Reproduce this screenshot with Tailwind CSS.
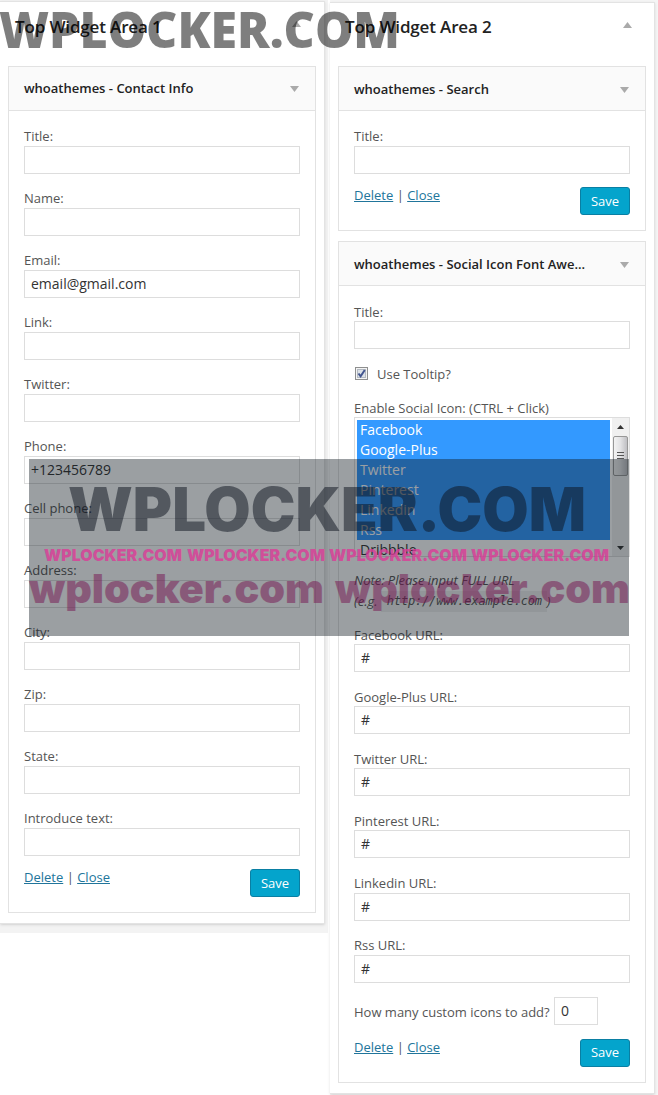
<!DOCTYPE html>
<html lang="en">
<head>
<meta charset="utf-8">
<title>Widgets</title>
<script src="https://cdn.jsdelivr.net/npm/@tailwindcss/browser@4"></script>
</head>
<body class="bg-white">
<div class="relative flex w-[658px] h-[1095px] items-start overflow-hidden font-['Open_Sans',sans-serif] text-[13px] leading-5 text-[#555]">

  <!-- Area 1 -->
  <section class="w-[328px] h-[933px] bg-[#f3f3f3] pt-px shrink-0">
    <div class="w-[325px] h-[923px] bg-white border-t border-r border-b border-[#e3e3e3] shadow-sm pl-2">
      <header class="flex h-16 items-start justify-between pl-[7px] pr-[23px]">
        <h2 class="pt-[12px] text-[17px] leading-[26px] font-semibold tracking-[-0.15px] text-[#222]">Top Widget Area 1</h2>
        <svg class="mt-[19px]" width="9" height="6"><path d="M4.5 0L9 6H0Z" fill="#aaa"/></svg>
      </header>
      <article class="w-[308px] h-[847px] border border-[#e2e2e2]">
        <header class="flex h-[44px] items-center justify-between bg-[#fafafa] border-b border-[#e2e2e2] pl-[15px] pr-4">
          <h3 class="pb-px font-semibold text-[#222]">whoathemes - Contact Info</h3>
          <svg width="9" height="6"><path d="M0 0H9L4.5 6Z" fill="#aaa"/></svg>
        </header>
        <div class="px-[15px] pt-[15px]">
          <div class="flex flex-col gap-[14px]">
            <label class="block">Title:<span class="block h-7 border border-[#ddd] bg-white"></span></label>
            <label class="block">Name:<span class="block h-7 border border-[#ddd] bg-white"></span></label>
            <label class="block">Email:<span class="block h-7 border border-[#ddd] bg-white px-1.5 text-[14px] leading-[26px] text-[#333]">email@gmail.com</span></label>
            <label class="block">Link:<span class="block h-7 border border-[#ddd] bg-white"></span></label>
            <label class="block">Twitter:<span class="block h-7 border border-[#ddd] bg-white"></span></label>
            <label class="block">Phone:<span class="block h-7 border border-[#ddd] bg-white px-1.5 text-[14px] leading-[26px] text-[#333]">+123456789</span></label>
            <label class="block">Cell phone:<span class="block h-7 border border-[#ddd] bg-white"></span></label>
            <label class="block">Address:<span class="block h-7 border border-[#ddd] bg-white"></span></label>
            <label class="block">City:<span class="block h-7 border border-[#ddd] bg-white"></span></label>
            <label class="block">Zip:<span class="block h-7 border border-[#ddd] bg-white"></span></label>
            <label class="block">State:<span class="block h-7 border border-[#ddd] bg-white"></span></label>
            <label class="block">Introduce text:<span class="block h-7 border border-[#ddd] bg-white"></span></label>
          </div>
          <footer class="mt-[13px] flex items-start justify-between">
            <p class="-mt-[2px]"><a class="text-[#21759b] underline">Delete</a> | <a class="text-[#21759b] underline">Close</a></p>
            <button class="h-7 w-[50px] rounded-[3px] border border-[#0a7fa3] bg-[#04a4cc] text-white">Save</button>
          </footer>
        </div>
      </article>
    </div>
  </section>

  <!-- Area 2 -->
  <section class="ml-[2px] w-[328px] h-[1095px] bg-[#f5f5f5] pt-[2px] shrink-0">
    <div class="w-[325px] h-[1092px] bg-white border-t border-r border-b border-[#e3e3e3] shadow-sm pl-2">
      <header class="flex h-[63px] items-start justify-between pl-[7px] pr-[22px]">
        <h2 class="pt-[11px] text-[17px] leading-[26px] font-semibold tracking-[-0.15px] text-[#222]">Top Widget Area 2</h2>
        <svg class="mt-[19px]" width="9" height="6"><path d="M4.5 0L9 6H0Z" fill="#aaa"/></svg>
      </header>
      <article class="w-[308px] h-[165px] border border-[#e2e2e2]">
        <header class="flex h-[44px] items-center justify-between bg-[#fafafa] border-b border-[#e2e2e2] pl-[15px] pr-4">
          <h3 class="pt-px font-semibold text-[#222]">whoathemes - Search</h3>
          <svg class="mt-[2px]" width="9" height="6"><path d="M0 0H9L4.5 6Z" fill="#aaa"/></svg>
        </header>
        <div class="px-[15px] pt-[15px]">
          <label class="block">Title:<span class="block h-7 border border-[#ddd] bg-white"></span></label>
          <footer class="mt-[13px] flex items-start justify-between">
            <p class="-mt-[2px]"><a class="text-[#21759b] underline">Delete</a> | <a class="text-[#21759b] underline">Close</a></p>
            <button class="h-7 w-[50px] rounded-[3px] border border-[#0a7fa3] bg-[#04a4cc] text-white">Save</button>
          </footer>
        </div>
      </article>
      <article class="mt-[10px] w-[308px] h-[842px] border border-[#e2e2e2]">
        <header class="flex h-[44px] items-center justify-between bg-[#fafafa] border-b border-[#e2e2e2] pl-[15px] pr-4">
          <h3 class="pt-px font-semibold text-[#222]">whoathemes - Social Icon Font Awe...</h3>
          <svg class="mt-[2px]" width="9" height="6"><path d="M0 0H9L4.5 6Z" fill="#aaa"/></svg>
        </header>
        <div class="px-[15px] pt-[15px]">
          <label class="block pt-px">Title:<span class="-mt-px block h-7 border border-[#ddd] bg-white"></span></label>
          <label class="mt-[15px] flex h-5 items-center gap-[9px] pl-px">
            <svg class="-mt-px" width="13" height="13"><rect x=".5" y=".5" width="12" height="12" fill="#f4f4f4" stroke="#8e8f8f"/><rect x="2.5" y="2.5" width="8" height="8" fill="#dde2e8" stroke="#b4bac2"/><path d="M3.5 6.5L5.6 9.3L9.8 3" fill="none" stroke="#42558f" stroke-width="2"/></svg>
            Use Tooltip?
          </label>
          <p class="mt-[14px] -mb-px">Enable Social Icon: (CTRL + Click)</p>
          <div class="flex h-[140px] justify-between border border-[#ddd] bg-white pl-[2px] pt-[2px] text-[14px]">
            <ul class="w-[253px]">
              <li class="h-5 bg-[#3399ff] pl-[3px] text-white">Facebook</li>
              <li class="h-5 bg-[#3399ff] pl-[3px] text-white">Google-Plus</li>
              <li class="h-5 bg-[#3399ff] pl-[3px] text-white">Twitter</li>
              <li class="h-5 bg-[#3399ff] pl-[3px] text-white">Pinterest</li>
              <li class="h-5 bg-[#3399ff] pl-[3px] text-white">Linkedin</li>
              <li class="h-5 bg-[#3399ff] pl-[3px] text-white">Rss</li>
              <li class="h-4 pl-[3px] text-[#333]">Dribbble</li>
            </ul>
            <svg class="-mt-[2px]" width="17" height="138">
              <defs><linearGradient id="thumb"><stop offset="0" stop-color="#f4f4f4"/><stop offset=".5" stop-color="#e2e2e4"/><stop offset="1" stop-color="#bcbcc0"/></linearGradient></defs>
              <rect width="17" height="138" fill="#f0f0f0"/>
              <path d="M8.500 7L12 11H5Z" fill="#333"/>
              <rect x="1.500" y="18.500" width="14" height="39" rx="1.500" fill="url(#thumb)" stroke="#979797"/>
              <path d="M5 34.500H12M5 37.500H12M5 40.500H12" stroke="#555"/>
              <path d="M5 128H12L8.500 132Z" fill="#333"/>
            </svg>
          </div>
          <p class="mt-[13px] h-[42px] italic leading-[21px]">Note: Please input FULL URL<br>(e.g. <code class="inline-block h-[21px] bg-[#f0f0f0] pl-[6px] pr-[5px] align-top font-['DejaVu_Sans_Mono',monospace] text-[12px] leading-[21px] tracking-[-0.18px]">http://www.example.com</code>)</p>
          <div class="mt-[12px] flex flex-col gap-[14px]">
            <label class="block pt-px">Facebook URL:<span class="-mt-px block h-7 border border-[#ddd] bg-white px-1.5 text-[14px] leading-[26px] text-[#333]">#</span></label>
            <label class="block pt-px">Google-Plus URL:<span class="-mt-px block h-7 border border-[#ddd] bg-white px-1.5 text-[14px] leading-[26px] text-[#333]">#</span></label>
            <label class="block pt-px">Twitter URL:<span class="-mt-px block h-7 border border-[#ddd] bg-white px-1.5 text-[14px] leading-[26px] text-[#333]">#</span></label>
            <label class="block pt-px">Pinterest URL:<span class="-mt-px block h-7 border border-[#ddd] bg-white px-1.5 text-[14px] leading-[26px] text-[#333]">#</span></label>
            <label class="mt-px block">Linkedin URL:<span class="block h-7 border border-[#ddd] bg-white px-1.5 text-[14px] leading-[26px] text-[#333]">#</span></label>
            <label class="block">Rss URL:<span class="block h-7 border border-[#ddd] bg-white px-1.5 text-[14px] leading-[26px] text-[#333]">#</span></label>
            <label class="flex h-7 items-center justify-start"><span class="w-[200px] pt-px whitespace-nowrap">How many custom icons to add?</span><span class="block h-7 w-[44px] border border-[#ddd] bg-white px-1.5 text-[14px] leading-[26px] text-[#333]">0</span></label>
          </div>
          <footer class="mt-[14px] flex items-start justify-between">
            <p class="-mt-[2px]"><a class="text-[#21759b] underline">Delete</a> | <a class="text-[#21759b] underline">Close</a></p>
            <button class="h-7 w-[50px] rounded-[3px] border border-[#0a7fa3] bg-[#04a4cc] pb-[2px] text-white">Save</button>
          </footer>
        </div>
      </article>
    </div>
  </section>

  <!-- Translucent watermark layer -->
  <svg class="pointer-events-none absolute left-0 top-0" width="658" height="1095">
    <g opacity=".5"><text x="-1" y="48" font-family="Open Sans" font-weight="800" font-size="49" textLength="401" lengthAdjust="spacingAndGlyphs">WPLOCKER.COM</text></g>
    <rect x="29" y="459" width="600" height="177" fill="#0b171c" fill-opacity=".41"/>
    <g font-family="Inter" font-weight="900">
      <g opacity=".5"><text x="68" y="531" font-size="60" textLength="518" lengthAdjust="spacingAndGlyphs" fill="#0d131f">WPLOCKER.COM</text></g>
      <g opacity=".8" fill="#dc3c98" font-size="16">
        <text x="44" y="561" textLength="138" lengthAdjust="spacingAndGlyphs">WPLOCKER.COM</text>
        <text x="187" y="561" textLength="138" lengthAdjust="spacingAndGlyphs">WPLOCKER.COM</text>
        <text x="329" y="561" textLength="138" lengthAdjust="spacingAndGlyphs">WPLOCKER.COM</text>
        <text x="471" y="561" textLength="138" lengthAdjust="spacingAndGlyphs">WPLOCKER.COM</text>
      </g>
      <g opacity=".5" fill="#771551" font-size="40">
        <text x="29" y="603" textLength="295" lengthAdjust="spacingAndGlyphs">wplocker.com</text>
        <text x="335" y="603" textLength="295" lengthAdjust="spacingAndGlyphs">wplocker.com</text>
      </g>
    </g>
  </svg>
</div>
</body>
</html>
